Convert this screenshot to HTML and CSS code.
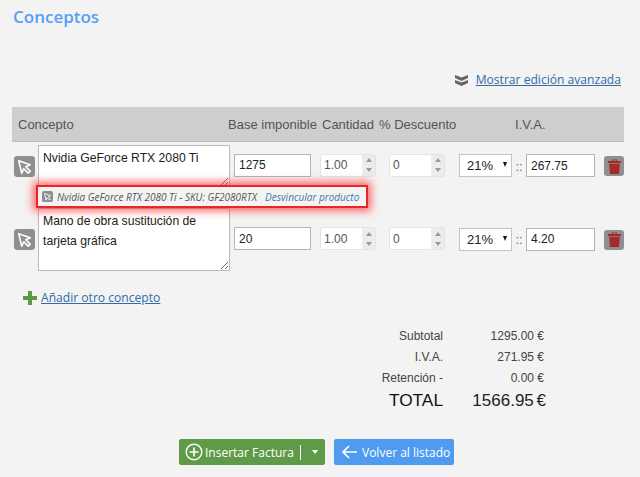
FILE: index.html
```html
<!DOCTYPE html>
<html lang="es">
<head>
<meta charset="utf-8">
<title>Conceptos</title>
<link rel="stylesheet" href="styles.css">
</head>
<body>
<main class="page">
  <h2 class="title">Conceptos</h2>
  <div class="advanced">
    <svg class="chev" width="13" height="11" viewBox="0 0 13 11"><path d="M0 0l6.500 2.500L13 0v3L6.500 6 0 3zM0 5l6.500 2.500L13 5v3l-6.500 3L0 8z" fill="#666"/></svg>
    <a class="link" href="#">Mostrar edición avanzada</a>
  </div>
  <div class="head">
    <div class="c-concept">Concepto</div>
    <div class="c-base">Base imponible</div>
    <div class="c-qty">Cantidad</div>
    <div class="c-disc">% Descuento</div>
    <div class="c-iva">I.V.A.</div>
  </div>

  <div class="lines">
    <div class="callout">
      <svg class="pick small" viewBox="0 0 20 20"><rect width="20" height="20" rx="3" fill="#8f8f8f"/><path d="M4.500 4.500l11 3.800-4.300 1.900 4.200 4.200-1.900 1.900-4.200-4.200-1.900 4.300z" fill="none" stroke="#fff" stroke-width="1.500" stroke-linejoin="round"/></svg>
      <span class="prod">Nvidia GeForce RTX 2080 Ti - SKU: GF2080RTX</span>
      <a class="unlink" href="#">Desvincular producto</a>
    </div>

    <div class="row">
      <svg class="pick" viewBox="0 0 20 20"><rect width="20" height="20" rx="3" fill="#8f8f8f"/><path d="M4.500 4.500l11 3.800-4.300 1.900 4.200 4.200-1.900 1.900-4.200-4.200-1.900 4.300z" fill="none" stroke="#fff" stroke-width="1.500" stroke-linejoin="round"/></svg>
      <textarea class="desc short">Nvidia GeForce RTX 2080 Ti</textarea>
      <input class="field base" value="1275">
      <div class="spin qty"><input value="1.00"><div class="arrows"><i class="up"></i><i class="down"></i></div></div>
      <div class="spin disc"><input value="0"><div class="arrows"><i class="up"></i><i class="down"></i></div></div>
      <div class="sel"><select><option>21%</option></select></div>
      <span class="sep">::</span>
      <input class="field amount" value="267.75">
      <button class="trash" aria-label="Borrar"><svg width="13" height="15" viewBox="0 0 13 15"><path d="M4 2V.500h5V2h4v2H0V2zM5 1.300V2h3v-.7zM1.200 4.800h10.600L11 15H2z" fill="#a52a2a" fill-rule="evenodd"/></svg></button>
    </div>

    <div class="row">
      <svg class="pick" viewBox="0 0 20 20"><rect width="20" height="20" rx="3" fill="#8f8f8f"/><path d="M4.500 4.500l11 3.800-4.300 1.900 4.200 4.200-1.900 1.900-4.200-4.200-1.900 4.300z" fill="none" stroke="#fff" stroke-width="1.500" stroke-linejoin="round"/></svg>
      <textarea class="desc tall">Mano de obra sustitución de tarjeta gráfica</textarea>
      <input class="field base" value="20">
      <div class="spin qty"><input value="1.00"><div class="arrows"><i class="up"></i><i class="down"></i></div></div>
      <div class="spin disc"><input value="0"><div class="arrows"><i class="up"></i><i class="down"></i></div></div>
      <div class="sel"><select><option>21%</option></select></div>
      <span class="sep">::</span>
      <input class="field amount" value="4.20">
      <button class="trash" aria-label="Borrar"><svg width="13" height="15" viewBox="0 0 13 15"><path d="M4 2V.500h5V2h4v2H0V2zM5 1.300V2h3v-.7zM1.200 4.800h10.600L11 15H2z" fill="#a52a2a" fill-rule="evenodd"/></svg></button>
    </div>
  </div>

  <div class="add">
    <svg width="14" height="14" viewBox="0 0 14 14"><path d="M5 0h4v5h5v4H9v5H5V9H0V5h5z" fill="#5c9a42"/></svg>
    <a class="link" href="#">Añadir otro concepto</a>
  </div>

  <div class="totals">
    <div class="t-label">Subtotal</div><div class="t-val">1295.00 €</div>
    <div class="t-label">I.V.A.</div><div class="t-val">271.95 €</div>
    <div class="t-label">Retención -</div><div class="t-val">0.00 €</div>
    <div class="t-label big">TOTAL</div><div class="t-val big">1566.95 €</div>
  </div>

  <div class="actions">
    <button class="btn green">
      <svg width="18" height="18" viewBox="0 0 18 18"><circle cx="9" cy="9" r="7.800" fill="none" stroke="#fff" stroke-width="1.400"/><path d="M9 4.500v9M4.500 9h9" stroke="#fff" stroke-width="1.600"/></svg>
      <span class="lbl">Insertar Factura</span><span class="divider"></span><span class="caret"></span>
    </button>
    <button class="btn blue">
      <svg width="15" height="14" viewBox="0 0 15 14"><path d="M7 1L1 7l6 6M1 7h14" fill="none" stroke="#fff" stroke-width="1.700"/></svg>
      <span class="lbl">Volver al listado</span>
    </button>
  </div>
</main>
</body>
</html>
```

FILE: styles.css
```css
* { box-sizing: border-box; }
html, body { margin: 0; padding: 0; }
body {
  width: 640px;
  height: 477px;
  overflow: hidden;
  background: #f3f3f3;
  font-family: "Liberation Sans", Arial, sans-serif;
  color: #555;
}
.page { padding: 7px 16px 0 12px; }
.title {
  margin: 0 0 0 1px;
  font: 600 17px/20px "Open Sans", sans-serif;
  color: #559ff7;
}
.advanced {
  display: flex;
  justify-content: flex-end;
  align-items: center;
  gap: 8px;
  margin-top: 44px;
  height: 18px;
  padding-right: 3px;
}
.link {
  font: 12.100px/18px "Open Sans", sans-serif;
  color: #2f6ea5;
  text-decoration: underline;
}
.head {
  display: flex;
  align-items: center;
  height: 35px;
  margin-top: 18px;
  background: #cecece;
  border-bottom: 1px solid #bdbdbd;
  font-size: 13px;
  color: #555;
}
.c-concept { width: 216px; padding-left: 6px; }
.c-base { width: 94px; }
.c-qty { width: 57px; }
.c-disc { width: 136px; }
.lines { position: relative; margin-top: 3px; }
.callout {
  position: absolute;
  z-index: 2;
  left: 24px;
  top: 40px;
  width: 332px;
  height: 23px;
  display: flex;
  align-items: center;
  gap: 4px;
  padding-left: 4px;
  background: #f3f3f3;
  border: 2px solid #e8262a;
  box-shadow: 0 0 8px 3px rgba(255, 40, 40, .7);
  font: italic 10px "Open Sans", sans-serif;
  white-space: nowrap;
}
.prod { color: #555; }
.unlink { color: #4a74ab; margin-left: 4px; text-decoration: none; }
.row { display: flex; align-items: center; margin-bottom: 21px; }
.row:last-of-type { margin-bottom: 18px; }
.pick { width: 21px; height: 21px; margin: 0 3px 0 2px; flex: none; }
.pick.small { width: 11px; height: 11px; margin: 0; flex: none; }
.desc {
  width: 192px;
  margin: 0 4px 0 0;
  padding: 2px 4px;
  border: 1px solid #bbb;
  background: #fff;
  font: 12.200px/20px "Liberation Sans", sans-serif;
  color: #222;
  display: block;
}
.short { height: 42px; }
.tall { height: 63px; }
.field {
  height: 23px;
  margin-bottom: 1px;
  padding: 0 4px;
  border: 1px solid #b5b5b5;
  background: #fff;
  font: 12px "Liberation Sans", sans-serif;
  color: #222;
}
.base { width: 77px; margin-right: 9px; margin-bottom: 2px; }
.spin {
  display: flex;
  width: 56px;
  height: 23px;
  margin-bottom: 2px;
  border: 1px solid #e4e4e4;
  border-radius: 3px;
  background: #ececec;
  overflow: hidden;
}
.qty { margin-right: 13px; }
.disc { margin-right: 14px; }
.spin input {
  width: 41px;
  border: 0;
  padding: 0 3px;
  background: #fff;
  font: 12px "Liberation Sans", sans-serif;
  color: #555;
}
.arrows {
  flex: 1;
  display: flex;
  flex-direction: column;
  justify-content: center;
  align-items: center;
  gap: 6px;
}
.arrows i { width: 0; height: 0; border-left: 3.500px solid transparent; border-right: 3.500px solid transparent; }
.up { border-bottom: 4px solid #999; }
.down { border-top: 4px solid #999; }
.sel { position: relative; width: 53px; height: 23px; margin-bottom: 1px; }
.sel::after {
  content: "";
  position: absolute;
  right: 5px;
  top: 8px;
  border-left: 2.500px solid transparent;
  border-right: 2.500px solid transparent;
  border-top: 5px solid #111;
}
.sel select {
  appearance: none;
  width: 100%;
  height: 100%;
  padding: 0 0 0 7px;
  border: 1px solid #c4c4c4;
  border-radius: 0;
  background: #fff;
  font: 13px "Liberation Sans", sans-serif;
  color: #222;
}
.sep { width: 14px; text-align: center; font-size: 13px; color: #666; }
.amount { width: 69px; margin-right: 9px; }
.trash {
  width: 20px;
  height: 20px;
  padding: 0;
  border: 0;
  border-radius: 3px;
  background: #8f8f8f;
  display: flex;
  align-items: center;
  justify-content: center;
}
.add {
  display: flex;
  align-items: center;
  gap: 4px;
  margin: 0 0 0 11px;
  height: 18px;
}
.totals {
  display: grid;
  grid-template-columns: 431px 101px;
  grid-auto-rows: 21px;
  margin-top: 19px;
  font-size: 12px;
  line-height: 21px;
  color: #444;
}
.t-label, .t-val { text-align: right; }
.t-label.big, .t-val.big { font-size: 17.300px; line-height: 21px; margin-top: 1px; color: #111; }
.t-val.big { font-size: 17px; word-spacing: -2px; margin-right: -2px; color: #222; }
.actions {
  display: flex;
  gap: 9px;
  margin: 29px 0 0 167px;
}
.btn {
  display: flex;
  align-items: center;
  height: 26px;
  padding: 0;
  border: 0;
  border-radius: 2px;
  color: #fff;
  font: 12px "Open Sans", sans-serif;
  white-space: nowrap;
}
.btn svg { flex: none; }
.green { width: 146px; background: #5f9a48; padding-left: 6px; gap: 2px; }
.blue { width: 120px; background: #4f9bf0; padding-left: 8px; gap: 5px; }
.divider { width: 1px; height: 15px; background: #fff; margin: 0 9px 0 4px; }
.caret { border-left: 3.500px solid transparent; border-right: 3.500px solid transparent; border-top: 4px solid #fff; }
```
